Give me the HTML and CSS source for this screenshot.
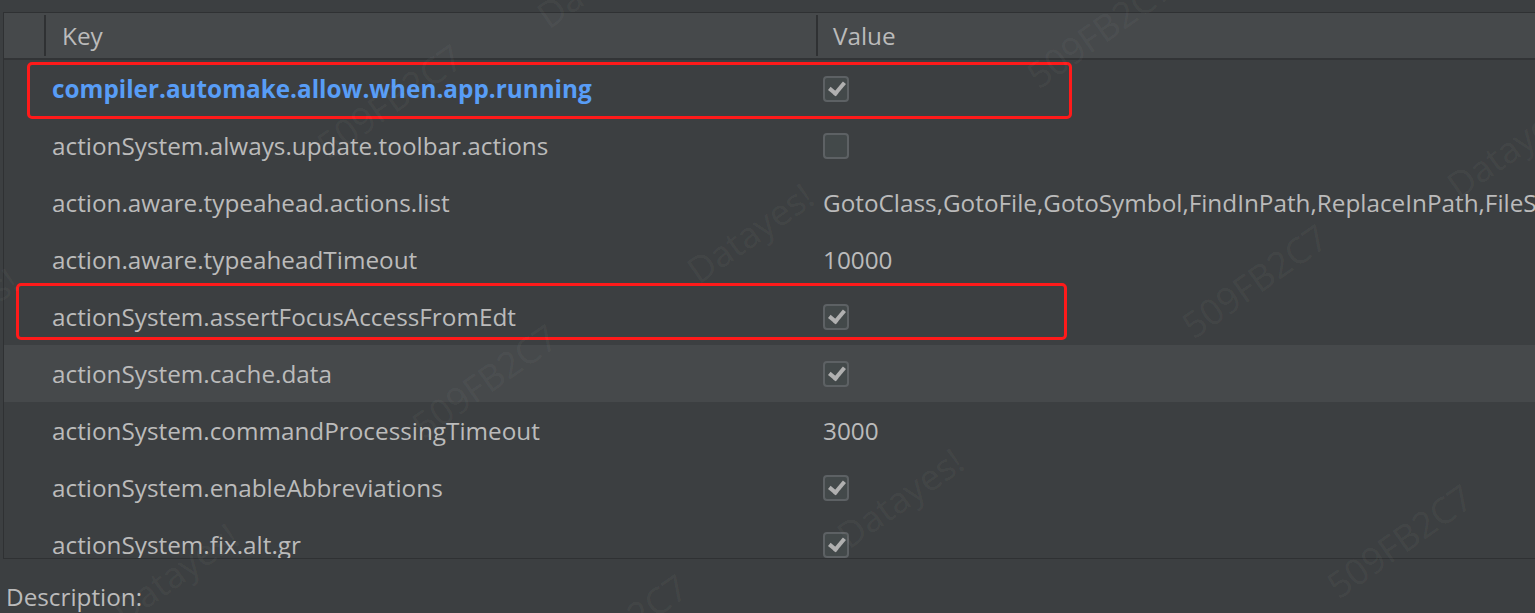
FILE: index.html
```html
<!DOCTYPE html>
<html>
<head>
<meta charset="utf-8">
<link rel="stylesheet" href="styles.css">
</head>
<body>
<div class="page">
  <div class="table">
    <div class="header">
      <div class="hcell marker"></div>
      <div class="hcell key">Key</div>
      <div class="hcell value">Value</div>
    </div>
    <div class="rows">
      <div class="row"><div class="k modified">compiler.automake.allow.when.app.running</div><div class="v"><span class="cb on"></span></div></div>
      <div class="row"><div class="k">actionSystem.always.update.toolbar.actions</div><div class="v"><span class="cb"></span></div></div>
      <div class="row"><div class="k">action.aware.typeahead.actions.list</div><div class="v">GotoClass,GotoFile,GotoSymbol,FindInPath,ReplaceInPath,FileStructurePopup</div></div>
      <div class="row"><div class="k">action.aware.typeaheadTimeout</div><div class="v">10000</div></div>
      <div class="row"><div class="k">actionSystem.assertFocusAccessFromEdt</div><div class="v"><span class="cb on"></span></div></div>
      <div class="row hover"><div class="k">actionSystem.cache.data</div><div class="v"><span class="cb on"></span></div></div>
      <div class="row"><div class="k">actionSystem.commandProcessingTimeout</div><div class="v">3000</div></div>
      <div class="row"><div class="k">actionSystem.enableAbbreviations</div><div class="v"><span class="cb on"></span></div></div>
      <div class="row"><div class="k">actionSystem.fix.alt.gr</div><div class="v"><span class="cb on"></span></div></div>
    </div>
  </div>
  <div class="desc">Description:</div>

  <div class="mark box1"></div>
  <div class="mark box2"></div>

  <div class="wm w1">Datayes!</div>
  <div class="wm w2">509FB2C7</div>
  <div class="wm w3">509FB2C7</div>
  <div class="wm w4">Datayes!</div>
  <div class="wm w5">Datayes!</div>
  <div class="wm w6">Datayes!</div>
  <div class="wm w7">509FB2C7</div>
  <div class="wm w8">509FB2C7</div>
  <div class="wm w10">Datayes!</div>
  <div class="wm w11">Datayes!</div>
  <div class="wm w12">509FB2C7</div>
  <div class="wm w13">509FB2C7</div>
</div>
</body>
</html>
```
FILE: styles.css
```css
html, body {
  margin: 0;
  padding: 0;
  background: #3c3f41;
  overflow: hidden;
}
.page {
  position: relative;
  width: 1535px;
  height: 613px;
  overflow: hidden;
  font-family: "Open Sans", "Noto Sans", sans-serif;
  font-size: 24.3px;
  color: #bbbbbb;
}
.table {
  margin-top: 12px;
  margin-left: 3px;
  height: 545px;
  border-top: 1px solid #2f3133;
  border-left: 1px solid #2f3133;
  border-bottom: 1px solid #2f3133;
  overflow: hidden;
  display: flex;
  flex-direction: column;
}
.header {
  flex: none;
  background: #46494b;
  border-bottom: 2px solid #323436;
  display: flex;
  align-items: stretch;
  padding: 2px 0;
  height: 41px;
}
.hcell {
  display: flex;
  align-items: center;
  flex: none;
  box-sizing: border-box;
}
.marker {
  width: 42px;
  border-right: 2px solid #2f3133;
}
.key {
  width: 772px;
  padding-left: 16px;
  border-right: 2px solid #2f3133;
}
.value {
  padding-left: 15px;
}
.rows {
  display: flex;
  flex-direction: column;
}
.row {
  height: 57px;
  flex: none;
  display: flex;
  align-items: center;
}
.row.hover {
  background: #46494b;
}
.k {
  flex: none;
  box-sizing: border-box;
  width: 819px;
  padding-left: 48px;
  white-space: nowrap;
}
.k.modified {
  color: #589df6;
  font-weight: bold;
}
.v {
  flex: none;
  white-space: nowrap;
  display: flex;
  align-items: center;
}
.cb {
  display: inline-block;
  width: 22px;
  height: 22px;
  border: 2px solid #5d6164;
  border-radius: 4px;
  background: #43494a;
  position: relative;
}
.cb.on::after {
  content: "";
  position: absolute;
  left: 7px;
  top: 1px;
  width: 6px;
  height: 12px;
  border-right: 4px solid #b0b0b0;
  border-bottom: 4px solid #b0b0b0;
  transform: rotate(40deg);
}
.desc {
  margin-top: 23px;
  margin-left: 6px;
  line-height: 30px;
}
.mark {
  position: absolute;
  border: 3px solid #ff1a1a;
  border-radius: 5px;
}
.box1 {
  left: 27px;
  top: 62px;
  width: 1039px;
  height: 51px;
}
.box2 {
  left: 16px;
  top: 283px;
  width: 1045px;
  height: 51px;
}
.wm {
  position: absolute;
  font-size: 36px;
  color: rgba(255, 255, 255, 0.05);
  transform: rotate(-35deg);
  transform-origin: left bottom;
  white-space: nowrap;
  pointer-events: none;
}
.w1 { left: 555px; top: -10px; }
.w2 { left: 1045px; top: 50px; }
.w3 { left: 335px; top: 120px; }
.w4 { left: 1465px; top: 160px; }
.w5 { left: 705px; top: 245px; }
.w6 { left: -90px; top: 330px; }
.w7 { left: 1200px; top: 300px; }
.w8 { left: 430px; top: 400px; }
.w10 { left: 855px; top: 510px; }
.w11 { left: 130px; top: 585px; }
.w12 { left: 1345px; top: 560px; }
.w13 { left: 560px; top: 650px; }
```
